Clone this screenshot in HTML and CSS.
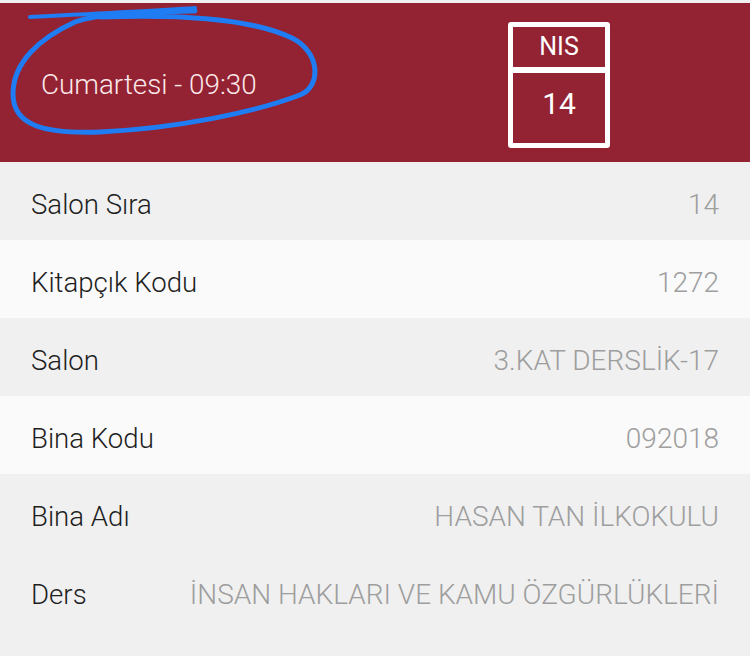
FILE: index.html
```html
<!DOCTYPE html>
<html lang="tr">
<head>
    <meta charset="UTF-8">
    <meta name="viewport" content="width=device-width, initial-scale=1.0">
    <title>Sınav Bilgileri</title>
    <link rel="stylesheet" href="styles.css">
</head>
<body>
    <header class="exam-head">
        <div class="exam-when">Cumartesi - 09:30</div>
        <div class="calendar">
            <div class="cal-month">NIS</div>
            <div class="cal-day">14</div>
        </div>
        <!-- hand drawn circle on the screenshot -->
        <svg class="scribble" width="330" height="140" viewBox="0 0 330 140">
            <path d="M30 17 C 90 14, 150 11, 195 8" fill="none" stroke="#1f7cf2" stroke-width="4" stroke-linecap="round"/>
            <path d="M195 11 C 150 12, 100 13, 75 22 C 40 38, 13 62, 13 94 C 13 126, 45 134, 100 132 C 180 128, 255 112, 300 95 C 322 86, 320 52, 292 38 C 250 18, 180 14, 100 17"
                  fill="none" stroke="#1f7cf2" stroke-width="5" stroke-linecap="round" stroke-linejoin="round"/>
        </svg>
    </header>

    <div class="info-list">
        <div class="info-row">
            <span class="label">Salon Sıra</span>
            <span class="value">14</span>
        </div>
        <div class="info-row">
            <span class="label">Kitapçık Kodu</span>
            <span class="value">1272</span>
        </div>
        <div class="info-row">
            <span class="label">Salon</span>
            <span class="value">3.KAT DERSLİK-17</span>
        </div>
        <div class="info-row">
            <span class="label">Bina Kodu</span>
            <span class="value">092018</span>
        </div>
        <div class="info-row">
            <span class="label">Bina Adı</span>
            <span class="value">HASAN TAN İLKOKULU</span>
        </div>
        <div class="info-row">
            <span class="label">Ders</span>
            <span class="value">İNSAN HAKLARI VE KAMU ÖZGÜRLÜKLERİ</span>
        </div>
    </div>
</body>
</html>
```

FILE: styles.css
```css
* {
    margin: 0;
    padding: 0;
    box-sizing: border-box;
}

body {
    font-family: Roboto, "Noto Sans", Arial, sans-serif;
    background-color: #f0f0f0;
    padding-top: 3px;
    width: 750px;
    height: 656px;
    overflow: hidden;
}

.exam-head {
    position: relative;
    height: 159px;
    background-color: #932232;
    display: flex;
    align-items: center;
    padding-left: 41px;
}

.exam-when {
    flex: 0 0 467px;
    color: #fbe8ea;
    font-size: 27.8px;
    font-weight: 300;
    padding-top: 4px;
}

.calendar {
    width: 102px;
    height: 126px;
    border: 5px solid #fff;
    border-radius: 3px;
    margin-top: 5px;
    color: #fff;
    text-align: center;
}

.cal-month {
    height: 46px;
    border-bottom: 6px solid #fff;
    font-size: 25px;
    line-height: 40px;
}

.cal-day {
    font-size: 30px;
    line-height: 62px;
}

.scribble {
    position: absolute;
    left: 0;
    top: -3px;
}

.info-row {
    height: 78px;
    display: flex;
    align-items: center;
    justify-content: space-between;
    padding: 7px 31px 0;
    font-size: 27.6px;
    font-weight: 300;
}

.info-row:nth-child(even) {
    background-color: #fafafa;
}

.info-row:nth-child(n+5) {
    background-color: #f0f0f0;
}

.label {
    color: #1e1e1e;
}

.value {
    color: #9e9e9e;
    font-size: 28px;
}
```
